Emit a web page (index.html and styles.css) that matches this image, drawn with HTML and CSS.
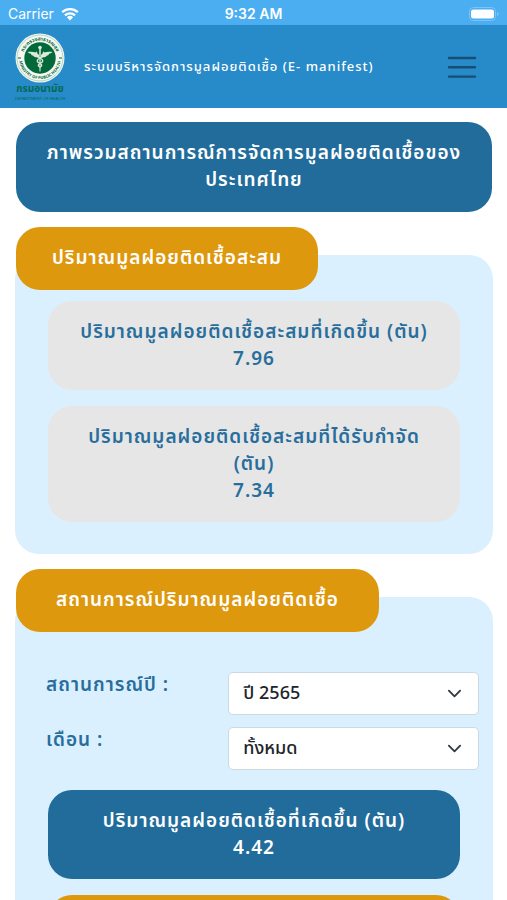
FILE: index.html
```html
<!DOCTYPE html>
<html lang="th">
<head>
<meta charset="utf-8">
<meta name="viewport" content="width=device-width, initial-scale=1">
<title>E-manifest</title>
<link rel="stylesheet" href="styles.css">
</head>
<body>
<div class="app">
  <div class="status">
    <div class="carrier">
      <span>Carrier</span>
      <svg class="wifi" viewBox="0 0 18 14" aria-hidden="true"><path d="M1.2 5.2a11.2 11.2 0 0 1 15.6 0M4 8.3a7.2 7.2 0 0 1 10 0" fill="none" stroke="#fff" stroke-width="2.3"/><path d="M9 13.4 5.9 10.3a4.5 4.5 0 0 1 6.2 0z" fill="#fff"/></svg>
    </div>
    <time class="clock">9:32 AM</time>
    <svg class="battery" viewBox="0 0 30 14" aria-hidden="true"><rect x=".5" y=".5" width="26" height="13" rx="4" fill="none" stroke="#7cc4f5"/><rect x="2" y="2.500" width="23" height="9" rx="2.5" fill="#fff"/><path d="M28 5v4q1.700-.5 1.700-2T28 5z" fill="#7cc4f5"/></svg>
  </div>
  <header class="navbar">
    <svg class="logo" viewBox="0 0 52 68" role="img" aria-label="กรมอนามัย">
      <defs>
        <path id="arc-top" d="M8.500 25a17.500 17.500 0 0 1 35 0"/>
        <path id="arc-bottom" d="M5 25a21 21 0 0 0 42 0"/>
      </defs>
      <circle cx="26" cy="25" r="24.500" fill="#f3f8f2"/>
      <circle cx="26" cy="25" r="23" fill="none" stroke="#8fbda0" stroke-width=".6"/>
      <circle cx="26" cy="25" r="15.700" fill="#04693a"/>
      <text class="seal seal-top"><textPath href="#arc-top" startOffset="50%">กระทรวงสาธารณสุข</textPath></text>
      <text class="seal"><textPath href="#arc-bottom" startOffset="50%">MINISTRY OF PUBLIC HEALTH</textPath></text>
      <path d="M4 25h3M45 25h3" stroke="#04693a"/>
      <g fill="#dcebdc">
        <circle cx="26" cy="14.500" r="1.800"/>
        <path d="M25.200 16h1.600l-.3 22.500h-1z"/>
        <path d="M25 22c-2-3-6-3.500-11.500-3 1.500 1.200 2 1.500 3.500 1.800.2 1.400 1.200 1.800 2.400 2 .5 1.400 2.600 1.800 5.600 1.200zM27 22c2-3 6-3.500 11.500-3-1.500 1.200-2 1.500-3.500 1.800-.2 1.400-1.200 1.800-2.400 2-.5 1.400-2.600 1.800-5.600 1.200z"/>
      </g>
      <path d="M23 19c-4 3 1 5 3 6s5 3 0 5.500c-3 1.500-1.500 3 0 3.800M29 19c4 3-1 5-3 6s-5 3 0 5.500c3 1.500 1.500 3 0 3.800" fill="none" stroke="#dcebdc" stroke-width="1.300"/>
      <text class="dept" x="26" y="59">กรมอนามัย</text>
      <text class="dept-en" x="26" y="67">DEPARTMENT OF HEALTH</text>
    </svg>
    <div class="brand">ระบบบริหารจัดการมูลฝอยติดเชื้อ (E- manifest)</div>
    <button class="menu" type="button" aria-label="เมนู">
      <svg viewBox="0 0 30 24" aria-hidden="true"><path d="M2 3h26M2 12.300h26M2 21.600h26" stroke="#164f73" stroke-width="2.400" stroke-linecap="round"/></svg>
    </button>
  </header>
  <main class="content">
    <h1 class="card title blue">ภาพรวมสถานการณ์การจัดการมูลฝอยติดเชื้อของประเทศไทย</h1>
    <section class="section">
      <h2 class="tab">ปริมาณมูลฝอยติดเชื้อสะสม</h2>
      <div class="panel">
        <div class="card gray">ปริมาณมูลฝอยติดเชื้อสะสมที่เกิดขึ้น (ตัน)<br>7.96</div>
        <div class="card gray">ปริมาณมูลฝอยติดเชื้อสะสมที่ได้รับกำจัด (ตัน)<br>7.34</div>
      </div>
    </section>
    <section class="section">
      <h2 class="tab tab-wide">สถานการณ์ปริมาณมูลฝอยติดเชื้อ</h2>
      <div class="panel">
        <form class="filters">
          <label for="year">สถานการณ์ปี :</label>
          <select id="year"><option>ปี 2565</option></select>
          <label for="month">เดือน :</label>
          <select id="month"><option>ทั้งหมด</option></select>
        </form>
        <div class="card blue">ปริมาณมูลฝอยติดเชื้อที่เกิดขึ้น (ตัน)<br>4.42</div>
        <div class="card orange"></div>
      </div>
    </section>
  </main>
</div>
</body>
</html>
```
FILE: styles.css
```css
* { box-sizing: border-box; }
body {
  margin: 0;
  background: #fff;
  font-family: "Noto Sans Thai", Prompt, Kanit, "Noto Sans", sans-serif;
}
.app { height: 100vh; display: flex; flex-direction: column; }
.status {
  display: grid;
  grid-template-columns: 1fr auto 1fr;
  align-items: center;
  flex: none;
  height: 25px;
  padding: 2px 8px 0;
  background: #4aaef1;
  color: #fff;
  font: 14px/20px Inter, sans-serif;
}
.carrier { display: flex; align-items: center; gap: 7px; }
.wifi { width: 18px; height: 14px; }
.clock { font-weight: 600; }
.battery { width: 30px; height: 14px; justify-self: end; }
.navbar {
  display: flex;
  align-items: center;
  flex: none;
  height: 83px;
  padding: 0 30px 0 14px;
  background: #278ac9;
  color: #fff;
}
.logo { width: 52px; height: 68px; }
.seal { font-size: 4px; font-weight: 700; fill: #04693a; text-anchor: middle; }
.seal-top { font-size: 5px; }
.dept { font-size: 10px; font-weight: 700; fill: #046a55; text-anchor: middle; }
.dept-en { font-family: "Liberation Sans", sans-serif; font-size: 4px; fill: #046a55; text-anchor: middle; }
.brand { flex: 1; margin-left: 18px; font-size: 13px; line-height: 18px; font-weight: 500; letter-spacing: 1px; }
.menu { padding: 0; border: 0; background: none; }
.menu svg { display: block; width: 30px; height: 24px; }
.content {
  flex: 1;
  min-height: 0;
  overflow-y: auto;
  scrollbar-width: none;
  padding: 14px 14px 0 15px;
}
.card, .tab {
  margin: 0;
  border-radius: 24px;
  font-size: 19px;
  line-height: 27px;
  font-weight: 600;
  letter-spacing: 1px;
  text-align: center;
}
.card { padding: 18px 24px 17px; }
.title { margin: 0 1px; padding: 18px 24px; }
.blue { background: #216c9b; color: #fff; }
.gray { background: #e6e6e6; color: #286e9d; }
.orange { background: #dd980e; min-height: 89px; }
.section { margin-top: 15px; }
.tab {
  position: relative;
  width: fit-content;
  margin: 0 1px;
  padding: 18px 36px;
  background: #dd980e;
  color: #fff;
}
.tab-wide { padding: 18px 40px; }
.panel {
  display: grid;
  gap: 16px;
  margin-top: -35px;
  padding: 46px 33px 32px;
  border-radius: 24px;
  background: #dbf0ff;
}
.filters {
  display: grid;
  grid-template-columns: 8fr 11fr;
  gap: 12px 0;
  margin: 29px -19px 4px -2px;
}
.filters label { color: #286e9d; font-size: 19px; line-height: 27px; font-weight: 600; letter-spacing: 1px; }
.filters select {
  appearance: none;
  height: 43px;
  padding: 0 14px;
  border: 1px solid #ced8e0;
  border-radius: 5px;
  background: #fff url("data:image/svg+xml,%3Csvg xmlns='http://www.w3.org/2000/svg' viewBox='0 0 16 16'%3E%3Cpath fill='none' stroke='%23343a40' stroke-width='2' stroke-linecap='round' stroke-linejoin='round' d='m2 5 6 6 6-6'/%3E%3C/svg%3E") no-repeat right 16px center / 15px;
  color: #212529;
  font: 500 18px/24px "Noto Sans Thai", Prompt, Kanit, "Noto Sans", sans-serif;
}
```
